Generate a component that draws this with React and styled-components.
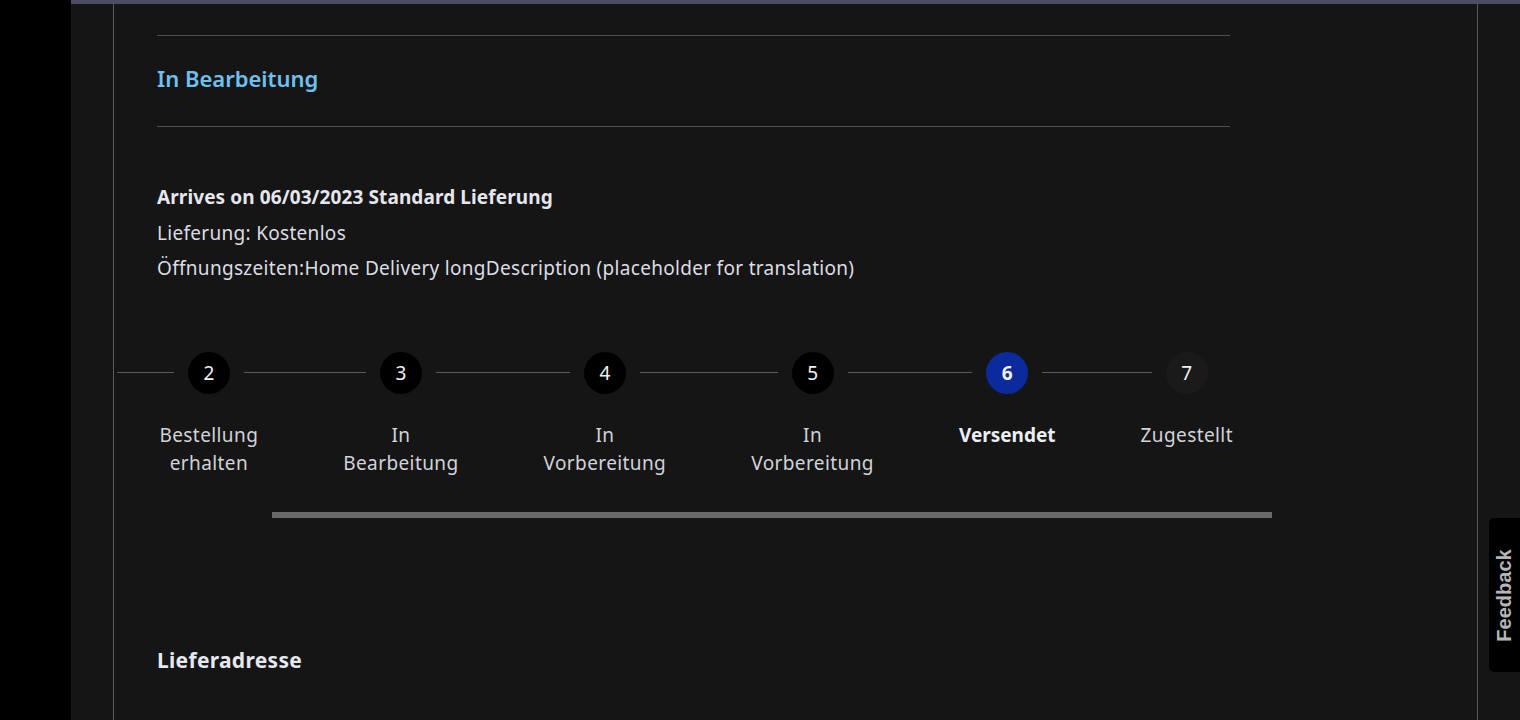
import React from "react";
import styled, { createGlobalStyle } from "styled-components";

const GlobalStyle = createGlobalStyle`
  html, body {
    margin: 0;
    padding: 0;
    background: #000;
    font-family: "Noto Sans", Roboto, sans-serif;
    overflow: hidden;
  }
`;

const Page = styled.div`
  display: flex;
  min-height: 720px;
  background: #000;
`;

const LeftStrip = styled.div`
  width: 71px;
  flex-shrink: 0;
  background: #000;
`;

const Main = styled.div`
  flex: 1;
  display: flex;
  flex-direction: column;
  background: #151515;
`;

const TopBar = styled.div`
  height: 4px;
  background: #4a4e60;
`;

const Frame = styled.div`
  margin: 0 42px;
  flex: 1;
  border-left: 1px solid #5a5a5a;
  border-right: 1px solid #5a5a5a;
  padding: 31px 0 0 43px;
  overflow: hidden;
`;

const Rule = styled.hr`
  width: 1073px;
  margin: ${(p) => p.$top || 0}px 0 0;
  border: none;
  border-top: 1px solid #4e4e4e;
`;

const StatusTitle = styled.h2`
  margin: 27px 0 0;
  font-size: 22px;
  line-height: 30px;
  font-weight: 600;
  color: #6fc0ee;
`;

const Delivery = styled.div`
  margin-top: 53px;
  color: #dcdde3;
  font-size: 19px;
  line-height: 35.5px;
  letter-spacing: 0.3px;
`;

const DeliveryTitle = styled.div`
  font-weight: 700;
  letter-spacing: 0.1px;
  color: #e6e7ee;
`;

const Stepper = styled.div`
  display: flex;
  margin: 65px 0 0 -40px;
`;

const Step = styled.div`
  display: flex;
  flex-direction: column;
  align-items: center;
  padding: 0 42.5px;
`;

const CircleRow = styled.div`
  display: flex;
  align-items: center;
  align-self: stretch;
  margin: 0 -42.5px;
`;

const Connector = styled.span`
  flex: 1;
  height: 1px;
  background: ${(p) => (p.$hidden ? "transparent" : "#5a5a5a")};
  margin: 0 ${(p) => (p.$side === "left" ? 14 : 0)}px 0 ${(p) => (p.$side === "right" ? 14 : 0)}px;
`;

const Circle = styled.div`
  width: 42px;
  height: 42px;
  flex-shrink: 0;
  border-radius: 50%;
  display: flex;
  align-items: center;
  justify-content: center;
  font-size: 19px;
  font-weight: ${(p) => (p.$active ? 700 : 400)};
  color: #f2f2f2;
  background: ${(p) => (p.$active ? "#0b2a9e" : p.$future ? "#1a1a1a" : "#000")};
`;

const StepLabel = styled.div`
  margin-top: 27px;
  text-align: center;
  font-size: 19px;
  line-height: 28px;
  letter-spacing: ${(p) => (p.$active ? 0 : 0.4)}px;
  font-weight: ${(p) => (p.$active ? 700 : 400)};
  color: ${(p) => (p.$active ? "#eceef5" : "#d2d3d8")};
  white-space: nowrap;
`;

const ScrollThumb = styled.div`
  width: 1000px;
  height: 6px;
  margin: 35px 0 0 115px;
  background: #696969;
`;

const SectionTitle = styled.h3`
  margin: 127px 0 0;
  font-size: 21px;
  line-height: 30px;
  font-weight: 700;
  letter-spacing: 0.3px;
  color: #e6e7ef;
`;

const FeedbackTab = styled.div`
  position: fixed;
  right: 0;
  top: 518px;
  width: 31px;
  height: 154px;
  background: #000;
  border-radius: 5px 0 0 5px;
  display: flex;
  align-items: center;
  justify-content: center;
`;

const FeedbackText = styled.span`
  transform: rotate(-90deg);
  font-family: "Liberation Sans", Arial, sans-serif;
  font-weight: 700;
  font-size: 20px;
  color: #b5b5b5;
  white-space: nowrap;
`;

const steps = [
  { n: 2, label: ["Bestellung", "erhalten"] },
  { n: 3, label: ["In", "Bearbeitung"] },
  { n: 4, label: ["In", "Vorbereitung"] },
  { n: 5, label: ["In", "Vorbereitung"] },
  { n: 6, label: ["Versendet"], active: true },
  { n: 7, label: ["Zugestellt"], future: true },
];

export default function App() {
  return (
    <Page>
      <GlobalStyle />
      <LeftStrip />
      <Main>
        <TopBar />
        <Frame>
          <Rule />
          <StatusTitle>In Bearbeitung</StatusTitle>
          <Rule $top={33} />
          <Delivery>
            <DeliveryTitle>Arrives on 06/03/2023 Standard Lieferung</DeliveryTitle>
            <div>Lieferung: Kostenlos</div>
            <div>Öffnungszeiten:Home Delivery longDescription (placeholder for translation)</div>
          </Delivery>
          <Stepper>
            {steps.map((s, i) => {
              const last = i === steps.length - 1;
              return (
                <Step key={s.n}>
                  <CircleRow>
                    <Connector $side="left" />
                    <Circle $active={s.active} $future={s.future}>{s.n}</Circle>
                    <Connector $side="right" $hidden={last} />
                  </CircleRow>
                  <StepLabel $active={s.active}>
                    {s.label.map((l) => (
                      <div key={l}>{l}</div>
                    ))}
                  </StepLabel>
                </Step>
              );
            })}
          </Stepper>
          <ScrollThumb />
          <SectionTitle>Lieferadresse</SectionTitle>
        </Frame>
      </Main>
      <FeedbackTab>
        <FeedbackText>Feedback</FeedbackText>
      </FeedbackTab>
    </Page>
  );
}
